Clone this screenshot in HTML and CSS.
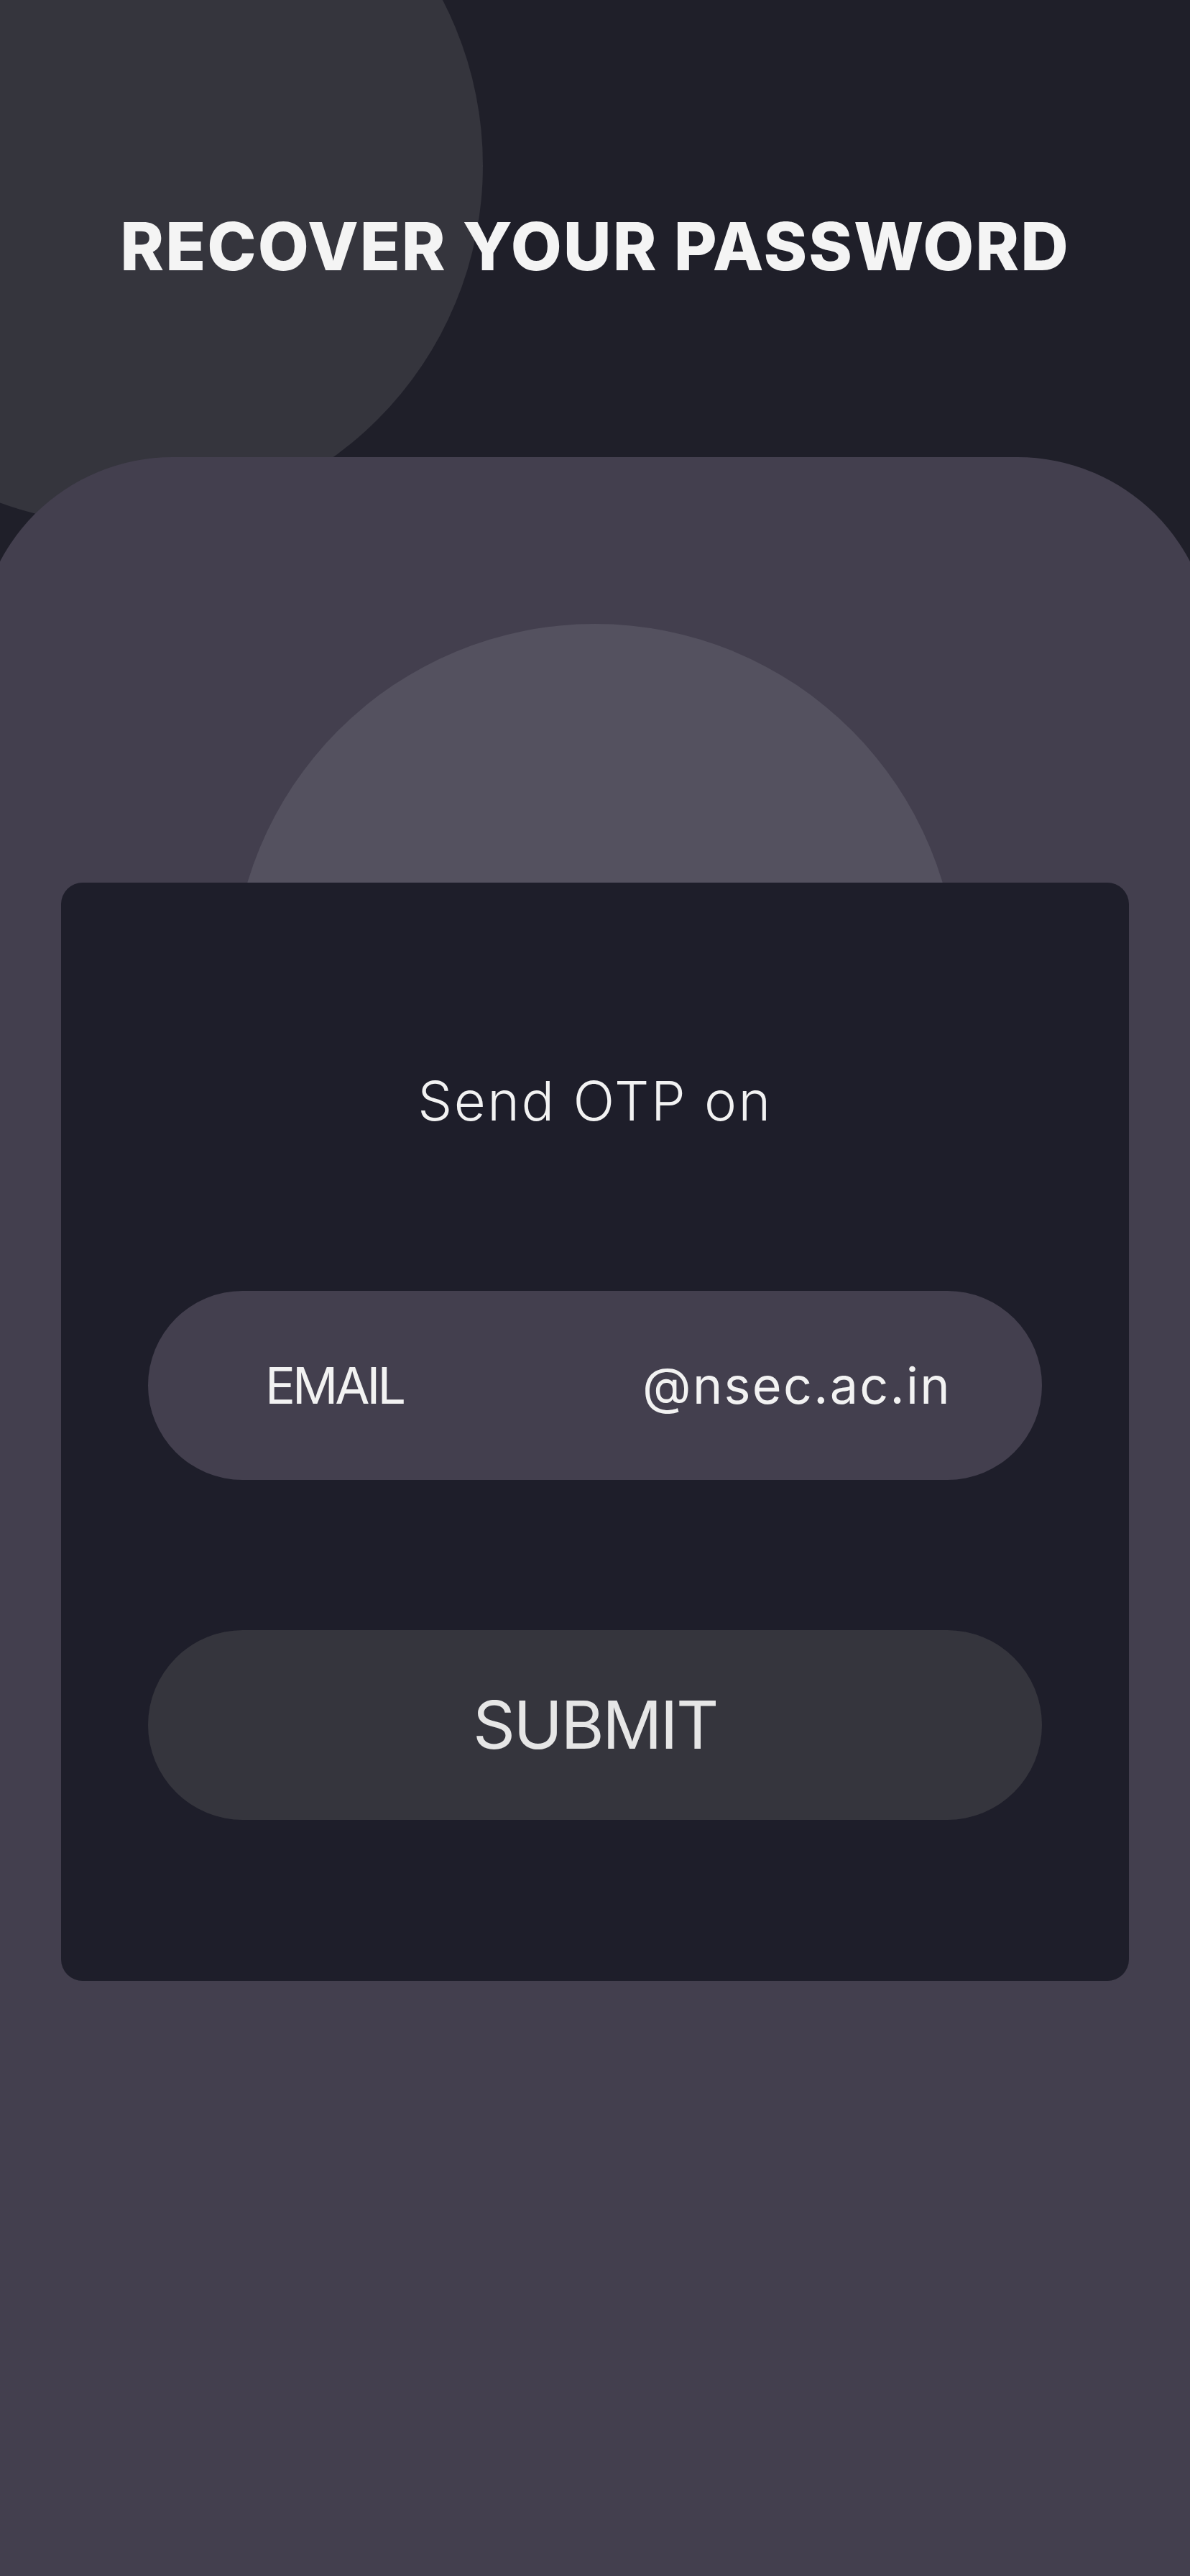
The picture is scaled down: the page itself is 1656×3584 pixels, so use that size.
FILE: index.html
```html
<!DOCTYPE html>
<html lang="en">
<head>
<meta charset="utf-8">
<title>Recover your password</title>
<link rel="stylesheet" href="styles.css">
</head>
<body>
<div class="page">
  <div class="blob"></div>
  <header class="header">
    <h1 class="title">RECOVER YOUR PASSWORD</h1>
  </header>
  <main class="panel">
    <div class="halo"></div>
    <section class="card">
      <h2 class="card-title">Send OTP on</h2>
      <div class="field">
        <span class="field-label">EMAIL</span>
        <span class="field-domain">@nsec.ac.in</span>
      </div>
      <button class="submit" type="button">SUBMIT</button>
    </section>
  </main>
</div>
</body>
</html>
```

FILE: styles.css
```css
* { box-sizing: border-box; }

html, body {
  margin: 0;
  padding: 0;
  background: #1f1f29;
}

body {
  font-family: "Inter", "Liberation Sans", sans-serif;
}

.page {
  position: relative;
  width: 1656px;
  height: 3584px;
  overflow: hidden;
  display: flex;
  flex-direction: column;
}

.blob {
  position: absolute;
  left: -328px;
  top: -270px;
  width: 1000px;
  height: 1000px;
  border-radius: 50%;
  background: #35353d;
}

.header {
  position: relative;
  height: 636px;
  padding-top: 297px;
  display: flex;
  justify-content: center;
}

.title {
  margin: 0;
  font-size: 92px;
  line-height: 1;
  font-weight: 800;
  letter-spacing: 2px;
  color: #f4f4f4;
}

.panel {
  position: relative;
  flex: 1;
  width: calc(100% + 62px);
  margin-left: -31px;
  border-radius: 271px 271px 0 0;
  background: #433f4e;
  display: flex;
  flex-direction: column;
  align-items: center;
  padding-top: 592px;
}

.halo {
  position: absolute;
  top: 232px;
  left: 50%;
  width: 1010px;
  height: 1010px;
  margin-left: -505px;
  border-radius: 50%;
  background: #54515f;
}

.card {
  position: relative;
  width: 1486px;
  height: 1528px;
  border-radius: 30px;
  background: #1e1e2a;
  display: flex;
  flex-direction: column;
  align-items: center;
  padding-top: 265px;
}

.card-title {
  margin: 0;
  font-size: 76px;
  line-height: 1;
  font-weight: 300;
  letter-spacing: 2.5px;
  color: #f2f2f2;
}

.field {
  margin-top: 227px;
  width: 1244px;
  height: 263px;
  border-radius: 132px;
  background: #433f4e;
  display: flex;
  align-items: center;
  justify-content: space-between;
  padding: 0 128px 0 163px;
  color: #f2f2f2;
  font-size: 70px;
  line-height: 1;
  font-weight: 400;
}

.field-label {
  letter-spacing: -4px;
}

.field-domain {
  letter-spacing: 2.3px;
  margin-right: -2px;
}

.submit {
  margin-top: 209px;
  width: 1244px;
  height: 264px;
  border: 0;
  border-radius: 132px;
  background: #35353d;
  color: #e6e6e6;
  font-family: "Inter", "Liberation Sans", sans-serif;
  font-size: 92px;
  line-height: 1;
  font-weight: 400;
  letter-spacing: -2.5px;
  padding: 0;
}
```
